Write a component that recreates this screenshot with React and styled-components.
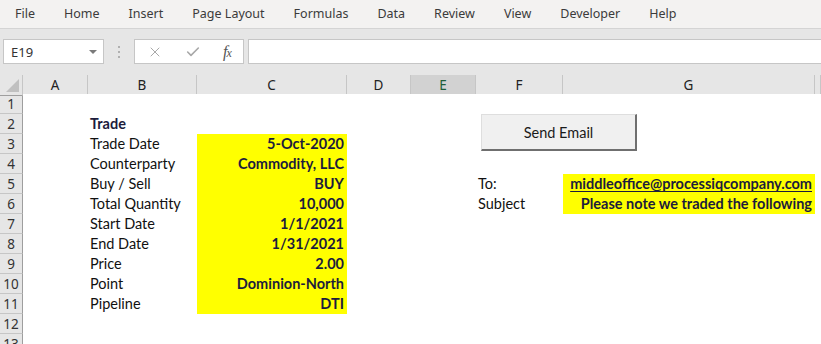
import React from 'react';
import styled, { createGlobalStyle } from 'styled-components';
import { X, Check } from 'lucide-react';

const GlobalStyle = createGlobalStyle`
  html, body {
    margin: 0;
    padding: 0;
    background: #ffffff;
    overflow: hidden;
  }
  * {
    box-sizing: border-box;
  }
`;

const menuItems = ['File', 'Home', 'Insert', 'Page Layout', 'Formulas', 'Data', 'Review', 'View', 'Developer', 'Help'];

// largura das colunas: cabeçalho de linha, A..G e o resto (H)
const colWidths = [23, 65, 109, 150, 64, 65, 87, 252];
const colLetters = ['A', 'B', 'C', 'D', 'E', 'F', 'G', ''];
const gridTemplate = colWidths.map((w) => `${w}px`).join(' ') + ' 1fr';

const tradeRows = [
  { label: 'Trade Date', value: '5-Oct-2020' },
  { label: 'Counterparty', value: 'Commodity, LLC' },
  { label: 'Buy / Sell', value: 'BUY' },
  { label: 'Total Quantity', value: '10,000' },
  { label: 'Start Date', value: '1/1/2021' },
  { label: 'End Date', value: '1/31/2021' },
  { label: 'Price', value: '2.00' },
  { label: 'Point', value: 'Dominion-North' },
  { label: 'Pipeline', value: 'DTI' },
];

const emailRows = {
  5: { label: 'To:', value: 'middleoffice@processiqcompany.com', link: true },
  6: { label: 'Subject', value: 'Please note we traded the following' },
};

const Page = styled.div`
  width: 821px;
  height: 344px;
  display: flex;
  flex-direction: column;
  overflow: hidden;
  font-family: "Noto Sans", "Open Sans", sans-serif;
`;

const MenuBar = styled.nav`
  height: 29px;
  flex-shrink: 0;
  display: flex;
  align-items: center;
  gap: 29px;
  padding: 0 0 1px 15px;
  background: #f3f2f1;
  border-bottom: 1px solid #d4d4d4;
`;

const MenuItem = styled.span`
  font-size: 12.5px;
  color: #3b3b3b;
`;

const FormulaBar = styled.div`
  height: 46px;
  flex-shrink: 0;
  display: flex;
  align-items: flex-start;
  padding: 10px 0 0 3px;
  background: #e6e6e6;
`;

const NameBox = styled.div`
  width: 101px;
  height: 25px;
  display: flex;
  align-items: center;
  justify-content: space-between;
  padding: 0 6px 0 7px;
  background: #ffffff;
  border: 1px solid #c6c6c6;
  font-size: 13px;
  color: #333333;
`;

const DropArrow = styled.span`
  width: 0;
  height: 0;
  border-left: 4px solid transparent;
  border-right: 4px solid transparent;
  border-top: 4px solid #7a7a7a;
`;

const Dots = styled.div`
  width: 30px;
  height: 25px;
  display: flex;
  flex-direction: column;
  align-items: center;
  justify-content: center;
  gap: 3px;
`;

const Dot = styled.span`
  width: 2px;
  height: 2px;
  background: #b0b0b0;
`;

const ActionBox = styled.div`
  width: 110px;
  height: 25px;
  display: flex;
  align-items: center;
  padding: 0 0 0 12px;
  gap: 22px;
  background: #ffffff;
  border: 1px solid #c6c6c6;
`;

const Fx = styled.span`
  font-family: "Liberation Serif", serif;
  font-style: italic;
  font-size: 16px;
  color: #555555;
  letter-spacing: -1px;

  small {
    font-size: 12px;
  }
`;

const FormulaInput = styled.div`
  flex: 1;
  height: 25px;
  margin-left: 4px;
  background: #ffffff;
  border: 1px solid #c6c6c6;
  border-right: none;
`;

const Sheet = styled.div`
  position: relative;
  flex: 1;
  display: flex;
  flex-direction: column;
`;

const GridRow = styled.div`
  display: grid;
  grid-template-columns: ${gridTemplate};
  height: ${(p) => p.$height}px;
  flex-shrink: 0;
`;

const Corner = styled.div`
  position: relative;
  background: #e6e6e6;
  border-right: 1px solid #c6c6c6;
  border-bottom: 1px solid #9e9e9e;

  &::after {
    content: '';
    position: absolute;
    right: 3px;
    bottom: 3px;
    width: 0;
    height: 0;
    border-left: 13px solid transparent;
    border-bottom: 13px solid #c0c0c0;
  }
`;

const ColHead = styled.div`
  display: flex;
  align-items: center;
  justify-content: center;
  background: ${(p) => (p.$selected ? '#d2d2d2' : '#e6e6e6')};
  border-right: 1px solid #c6c6c6;
  border-bottom: ${(p) => (p.$selected ? '2px solid #217346' : '1px solid #9e9e9e')};
  font-size: 13.5px;
  color: ${(p) => (p.$selected ? '#1e5e3a' : '#222222')};
  padding-top: ${(p) => (p.$selected ? '1px' : '0')};
`;

const RowHead = styled.div`
  display: flex;
  align-items: center;
  justify-content: center;
  background: #e6e6e6;
  border-right: 1px solid #9e9e9e;
  border-bottom: 1px solid #c6c6c6;
  font-size: 13.5px;
  color: #333333;
`;

const Cell = styled.div`
  display: flex;
  align-items: flex-end;
  justify-content: ${(p) => (p.$right ? 'flex-end' : 'flex-start')};
  padding: 0 3px 2px 2px;
  background: ${(p) => (p.$fill ? '#ffff00' : '#ffffff')};
  font-family: Lato, "Noto Sans", sans-serif;
  font-size: 14.5px;
  font-weight: ${(p) => (p.$bold ? 700 : 400)};
  color: ${(p) => (p.$bold ? '#1c1c3c' : '#111111')};
  text-decoration: ${(p) => (p.$link ? 'underline' : 'none')};
  text-underline-offset: 2px;
  white-space: nowrap;
  overflow: visible;
`;

const SendButton = styled.button`
  position: absolute;
  left: 481px;
  top: 39px;
  width: 156px;
  height: 37px;
  padding: 0;
  background: #f0f0f0;
  border-top: 1px solid #dedede;
  border-left: 1px solid #dedede;
  border-right: 2px solid #6f6f6f;
  border-bottom: 2px solid #6f6f6f;
  font-family: Lato, "Noto Sans", sans-serif;
  font-size: 14.5px;
  color: #1a1a1a;
`;

function cellsFor(rowNum) {
  // índices 0..7 = colunas A..H
  const cells = Array(8).fill(null);
  if (rowNum === 2) {
    cells[1] = { text: 'Trade', bold: true };
  }
  const trade = tradeRows[rowNum - 3];
  if (trade) {
    cells[1] = { text: trade.label };
    cells[2] = { text: trade.value, bold: true, right: true, fill: true };
  }
  const email = emailRows[rowNum];
  if (email) {
    cells[5] = { text: email.label };
    cells[6] = { text: email.value, bold: true, right: true, fill: true, link: email.link };
  }
  return cells;
}

const App = () => {
  const rows = Array.from({ length: 13 }, (_, i) => i + 1);

  return (
    <>
      <GlobalStyle />
      <Page>
        <MenuBar>
          {menuItems.map((m) => (
            <MenuItem key={m}>{m}</MenuItem>
          ))}
        </MenuBar>

        <FormulaBar>
          <NameBox>
            E19
            <DropArrow />
          </NameBox>
          <Dots>
            <Dot />
            <Dot />
            <Dot />
          </Dots>
          <ActionBox>
            <X size={16} color="#a8a8a8" strokeWidth={1.5} />
            <Check size={16} color="#a8a8a8" strokeWidth={2.4} />
            <Fx>
              f<small>x</small>
            </Fx>
          </ActionBox>
          <FormulaInput />
        </FormulaBar>

        <Sheet>
          <GridRow $height={19}>
            <Corner />
            {colLetters.map((c, i) => (
              <ColHead key={i} $selected={c === 'E'}>
                {c}
              </ColHead>
            ))}
          </GridRow>

          {rows.map((r) => (
            <GridRow key={r} $height={20}>
              <RowHead>{r}</RowHead>
              {cellsFor(r).map((cell, i) => (
                <Cell
                  key={i}
                  $bold={cell?.bold}
                  $right={cell?.right}
                  $fill={cell?.fill}
                  $link={cell?.link}
                >
                  {cell?.text}
                </Cell>
              ))}
            </GridRow>
          ))}

          <SendButton>Send Email</SendButton>
        </Sheet>
      </Page>
    </>
  );
};

export default App;
